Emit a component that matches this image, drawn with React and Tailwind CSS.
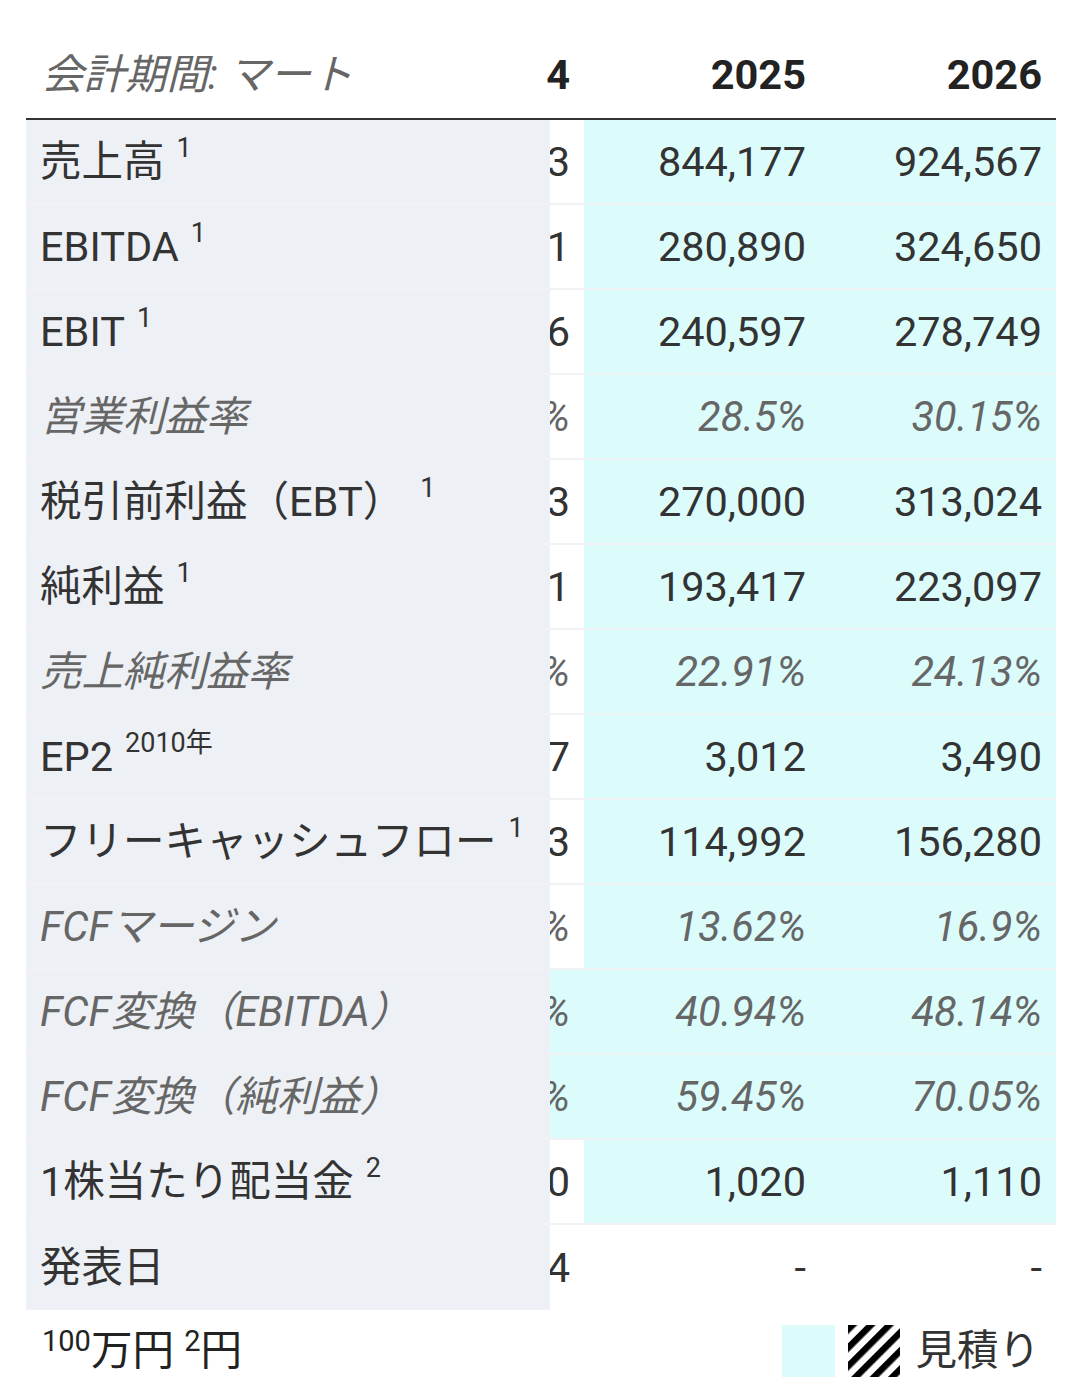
const rows = [
  { label: '売上高', sup: '1', prev: '3', a: '844,177', b: '924,567' },
  { label: 'EBITDA', sup: '1', prev: '1', a: '280,890', b: '324,650' },
  { label: 'EBIT', sup: '1', prev: '6', a: '240,597', b: '278,749' },
  { label: '営業利益率', prev: '%', a: '28.5%', b: '30.15%', italic: true },
  { label: '税引前利益（EBT）', sup: '1', prev: '3', a: '270,000', b: '313,024', supGap: true },
  { label: '純利益', sup: '1', prev: '1', a: '193,417', b: '223,097' },
  { label: '売上純利益率', prev: '%', a: '22.91%', b: '24.13%', italic: true },
  { label: 'EP2', sup: '2010年', prev: '7', a: '3,012', b: '3,490' },
  { label: 'フリーキャッシュフロー', sup: '1', prev: '3', a: '114,992', b: '156,280' },
  { label: 'FCFマージン', prev: '%', a: '13.62%', b: '16.9%', italic: true },
  { label: 'FCF変換（EBITDA）', prev: '%', a: '40.94%', b: '48.14%', italic: true, prevEst: true },
  { label: 'FCF変換（純利益）', prev: '%', a: '59.45%', b: '70.05%', italic: true, prevEst: true },
  { label: '1株当たり配当金', sup: '2', prev: '0', a: '1,020', b: '1,110' },
  { label: '発表日', prev: '4', a: '-', b: '-', noEst: true },
]

function Row({ r, last }) {
  const tone = r.italic ? 'italic text-[#666]' : 'text-[#333]'
  const line = last ? '' : 'border-b-2 border-[#f1f2f3]'
  const est = r.noEst ? 'bg-white' : 'bg-[#dcfcfc]'
  return (
    <div className="flex h-[85px]">
      {/* pinned label column */}
      <div className={`w-[524px] shrink-0 bg-[#edf0f4] pl-[14px] flex items-center ${line}`}>
        <span className={`whitespace-nowrap ${tone}`}>
          {r.label}
          {r.sup && (
            <sup className={`text-[27px] not-italic relative -top-[19px] ${r.supGap ? 'ml-[16px]' : 'ml-[12px]'}`}>
              {r.sup}
            </sup>
          )}
        </span>
      </div>
      {/* scrolled-off column, only its last glyph shows */}
      <div className={`w-[34px] shrink-0 overflow-hidden flex items-center justify-end pr-[14px] ${r.prevEst ? 'bg-[#dcfcfc]' : 'bg-white'} ${line}`}>
        <span className={`whitespace-nowrap ${tone}`}>{r.prev}</span>
      </div>
      <div className={`w-[236px] shrink-0 flex items-center justify-end pr-[14px] ${est} ${line}`}>
        <span className={tone}>{r.a}</span>
      </div>
      <div className={`w-[236px] shrink-0 flex items-center justify-end pr-[14px] ${est} ${line}`}>
        <span className={tone}>{r.b}</span>
      </div>
    </div>
  )
}

export default function App() {
  return (
    <div
      className="w-[1080px] h-[1400px] bg-white pt-[38px] text-[41.5px] leading-none"
      style={{ fontFamily: 'Roboto, "Noto Sans CJK JP", sans-serif' }}
    >
      <div className="ml-[26px] w-[1030px]">
        {/* header */}
        <div className="flex h-[82px] border-b-2 border-[#333] pb-[6px]">
          <div className="w-[524px] shrink-0 pl-[16px] flex items-center italic text-[#666]">
            会計期間: マート
          </div>
          <div className="w-[34px] shrink-0 flex items-center justify-end pr-[14px] font-bold text-[#222]">4</div>
          <div className="w-[236px] shrink-0 flex items-center justify-end pr-[14px] font-bold text-[#222]">2025</div>
          <div className="w-[236px] shrink-0 flex items-center justify-end pr-[14px] font-bold text-[#222]">2026</div>
        </div>

        {rows.map((r, i) => (
          <Row key={r.label} r={r} last={i === rows.length - 1} />
        ))}
      </div>

      {/* footnotes and legend */}
      <div className="flex items-center justify-between pl-[42px] pr-[40px] mt-[14px] h-[54px]">
        <div className="text-[#222] whitespace-nowrap">
          <sup className="text-[29px] relative -top-[14px]">100</sup>万円 <sup className="text-[29px] relative -top-[14px]">2</sup>円
        </div>
        <div className="flex items-center">
          <div className="w-[53px] h-[52px] bg-[#dcfcfc]" />
          <svg className="ml-[13px]" width="52" height="52" viewBox="0 0 52 52">
            <defs>
              <pattern id="hatch" width="13" height="13" patternUnits="userSpaceOnUse" patternTransform="rotate(45)">
                <rect width="6.5" height="13" fill="#000" />
              </pattern>
            </defs>
            <rect width="52" height="52" fill="#fff" />
            <rect width="52" height="52" fill="url(#hatch)" />
          </svg>
          <span className="ml-[15px] text-[#333]">見積り</span>
        </div>
      </div>
    </div>
  )
}
